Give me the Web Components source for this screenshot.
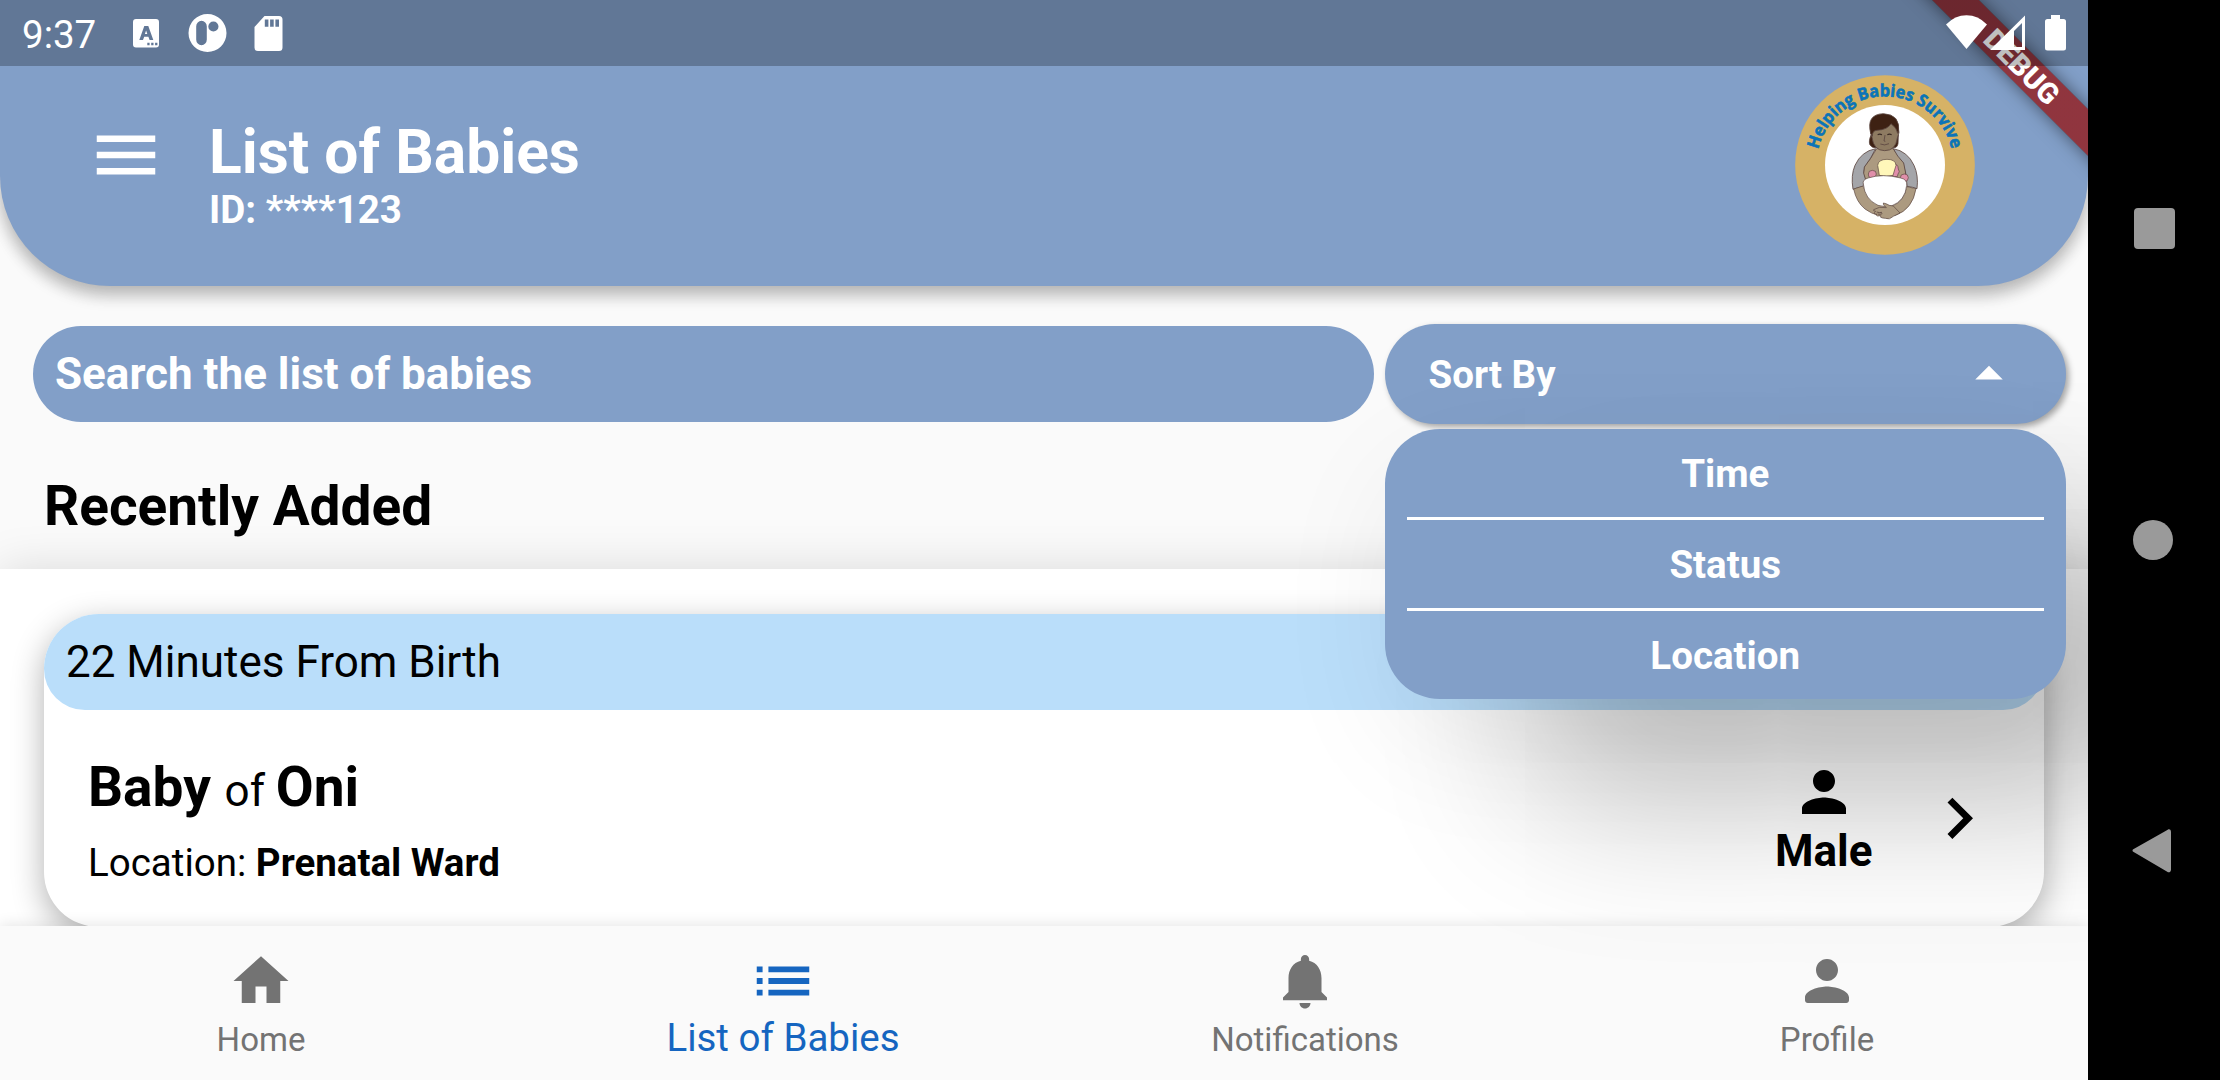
<!DOCTYPE html>
<html lang="en">
<head>
<meta charset="utf-8">
<title>List of Babies</title>
<style>
html,body{margin:0;height:100%;background:#000;overflow:hidden}
body{font-family:Roboto,"Liberation Sans",sans-serif;color:#000;--blue:#829fc8}
.screen{display:flex;width:2220px;height:1080px}
</style>
</head>
<body>
<div class="screen">
  <baby-app></baby-app>
  <system-nav></system-nav>
</div>
<script>
const define = (name, html) => {
  const t = document.createElement('template');
  t.innerHTML = html;
  customElements.define(name, class extends HTMLElement {
    constructor() {
      super();
      this.attachShadow({mode: 'open'}).append(t.content.cloneNode(true));
    }
  });
};

define('system-nav', `
<style>
:host{display:flex;flex-direction:column;width:132px;background:#000;align-items:center}
svg{display:block;width:132px;height:1080px;fill:#9a9a9a}
</style>
<svg viewBox="0 0 132 1080"><rect x="46" y="208" width="41" height="41" rx="4"/><circle cx="65" cy="540" r="20"/><path d="M46 850.5 80.500 831q1-1 1 1V869.500q0 2-1.500 1z" stroke="#9a9a9a" stroke-width="3" stroke-linejoin="round"/></svg>`);

define('status-bar', `
<style>
:host{display:flex;box-sizing:border-box;height:66px;background:rgba(0,0,0,.25);color:#fff;font-size:38.5px;line-height:69px;padding-left:22px}
span{width:111px}
svg{display:block;height:66px;fill:#fff}
.r{margin-left:auto}
</style>
<span>9:37</span>
<svg width="160" viewBox="133 0 160 66">
<path fill-rule="evenodd" d="M136 19h20q3 0 3 3v22.500q0 3-3 3h-20q-3 0-3-3V22q0-3 3-3zM144.300 26l-5 14h3.700l1.200-3.300h4.200l1.200 3.300h3.700l-5-14zm1.800 4.500 1.200 3.500h-2.400zM147.300 42.800v2.400h2.300v-2.400zm3.900 0v2.400h2.300v-2.400zm3.900 0v2.400h2.300v-2.400z"/>
<path fill-rule="evenodd" d="M207.500 14a19 19 0 1 1 0 38a19 19 0 1 1 0-38zM196.200 26.500v13a5.300 5.800 0 0 0 10.600 0v-13a5.300 5.800 0 0 0-10.600 0zM208.300 26.500a5.100 5.100 0 1 0 10.200 0a5.100 5.100 0 1 0-10.200 0z"/>
<path fill-rule="evenodd" d="M264.500 16h14.500q3.500 0 3.500 3.500V47.500q0 3.500-3.500 3.500h-21q-3.500 0-3.500-3.500V27zM264.800 19.500v7.200h3.600v-7.200zm5.300 0v7.200h3.600v-7.200zm5.300 0v7.200h3.600v-7.200z"/>
</svg>
<svg class="r" width="148" viewBox="1940 0 148 66">
<path d="M1946 24.500Q1955 15.300 1966.500 15.300T1987 24.500L1966.500 49z"/>
<path fill-rule="evenodd" d="M2025 15.500V50H1990zM2022 23 2014 31V47h8z"/>
<path d="M2051 15h9v4h3.500q2.500 0 2.500 2.500V48q0 2.500-2.500 2.500h-16q-2.500 0-2.500-2.500V21.500q0-2.500 2.500-2.500h3.500z"/>
</svg>`);

define('debug-banner', `
<style>
:host{display:block;overflow:hidden;width:220px;height:220px;position:relative}
div{position:absolute;left:-16px;top:49.5px;width:340px;height:33px;line-height:34px;text-align:center;transform:rotate(45deg);background:linear-gradient(rgba(183,28,28,.627),rgba(183,28,28,.627)),rgba(0,0,0,.4);
color:#fff;font-weight:900;font-size:29px;box-shadow:0 0 17px rgba(0,0,0,.5)}
</style><div>DEBUG</div>`);

define('brand-logo', `
<style>
:host{display:block;width:180px;height:180px}
svg{display:block;width:180px;height:180px}
text{font:bold 51px "Open Sans",sans-serif;fill:#0b74b8;stroke:#0b74b8;stroke-width:1.800px}
</style>
<svg viewBox="105 75 540 540">
<defs><path id="arc" d="M175 299A205 205 0 0 1 576 304"/></defs>
<circle cx="375" cy="345" r="269.500" fill="#d6b266"/><circle cx="375" cy="345" r="180" fill="#fff"/>
<text textLength="551" lengthAdjust="spacingAndGlyphs"><textPath href="#arc" textLength="551" lengthAdjust="spacingAndGlyphs">Helping Babies Survive</textPath></text>
<g stroke="#5b4640" stroke-width="2.500" stroke-linejoin="round">
<path fill="#3e2113" d="M333 255q-8 20-3 30 8 10 16 8h54q12 1 14-12l1-26z"/>
<path fill="#ac9a80" d="M350 296Q330 330 312 352q-5 20 2 38h120q5-15 1-43-2-10-9-15-20-25-26-36z"/>
<path fill="#a4a5a9" d="M347 296q-43 8-62 50-13 30-6 72 14-5 31-9-2-12 7-20-10-20-4-38 20-25 34-55z"/>
<path fill="#a4a5a9" d="M400 296q43 8 62 50 14 30 9 70-13-5-30-7 0-30-10-70-20-20-31-43z"/>
<path fill="#ac9a80" d="M281 417q8 39 34 60 20 15 42 19l27-4 22 4q52-18 62-80l-28-6q-8 45-42 57l-26-3q-43-5-61-52l-2-4z" stroke-width="2"/>
<path fill="#8e7b62" d="M334 235q-6 12 2 27 5 40 38 40t38-38q8-16 3-30l-20-25h-45z"/>
<path fill="#3e2113" d="M332 250q-14-57 38-59 52 2 46 56l-3 3q-2-16-20-29-10 18-42 20-14 0-14 18z"/>
<path fill="#e08faa" stroke-width="2" d="M325 372q0-11 12-11t12 11-12 12-12-12zM421 383q0-11 12-11t12 11-12 12-12-12zM402 345q12-5 13 12 6 9-1 15l-2 8q-10 2-18-6z"/>
<path fill="#fff7ba" stroke-width="2" d="M353 346q2-18 28-18t27 18l-9 30q-20 6-41 0z"/>
<path fill="#fff" stroke-width="2" d="M310 402q-4-12 14-18 44-14 98 0 20 4 18 22-4 46-46 62-20 4-40-2-40-18-44-64z"/>
<path fill="#ac9a80" stroke-width="2" d="M400 468l-12-2q-10-6-18-7-3 4 9 14-22-5-38 6-2 5 6 5-6 4-3 8h6q-3 5 3 6l9-1q-3 6 6 7l8 1q12 6 24-6l20-10z"/>
</g>
<path fill="none" stroke="#3b2b24" stroke-width="3.500" d="M353 254q6-3 13 0M382 254q6-3 13 0"/>
<path fill="none" stroke="#5b4640" stroke-width="2.500" d="M375 255l-3 18 4 1M361 282q13 6 26-1M350 486q8 3 16 1M353 492q8 2 14-1"/>
</svg>`);

define('app-header', `
<style>
:host{display:flex;box-sizing:border-box;height:286px;background:var(--blue);border-radius:0 0 110px 110px;box-shadow:0 10px 16px rgba(0,0,0,.2),0 5px 18px rgba(0,0,0,.12);color:#fff;font-weight:700;align-items:flex-start;padding:0 113px 0 87px;flex:none;position:relative}
.menu{width:78px;height:78px;margin-top:115.500px;fill:#fff}
.t{margin:117px auto 0 44px}
h1{margin:0;font-size:60.5px;font-weight:700;line-height:71px}
p{margin:-1px 0 0;font-size:38.5px;line-height:45px}
brand-logo{margin-top:75px}
</style>
<svg class="menu" viewBox="0 0 24 24"><path d="M3 18h18v-2H3v2zm0-5h18v-2H3v2zm0-7v2h18V6H3z"/></svg>
<div class="t"><h1>List of Babies</h1><p>ID: ****123</p></div>
<brand-logo></brand-logo>`);

define('search-field', `
<style>:host{display:flex;flex:1;box-sizing:border-box;height:96px;border-radius:48px;background:var(--blue);color:#fff;font-weight:700;font-size:44px;align-items:center;padding-left:22px}</style>
<span><slot></slot></span>`);

define('menu-option', `
<style>
:host{display:block;color:#fff;font-weight:700;font-size:38.5px;line-height:90px;height:88px;text-align:center;border-bottom:3px solid #fff}
:host(:last-of-type){border:0}
</style><slot></slot>`);

define('sort-menu', `
<style>
:host{display:block;position:relative;width:681.5px;z-index:5;color:#fff;font-weight:700;font-size:38.5px}
.b{display:flex;box-sizing:border-box;height:99.500px;border-radius:50px;background:var(--blue);box-shadow:3px 3px 6px rgba(0,0,0,.34);align-items:center;justify-content:space-between;padding:0 44px}
.b span{padding-top:2px}
svg{width:66px;height:66px;fill:#fff}
.d{position:absolute;top:105px;left:0;right:0;border-radius:55px;background:var(--blue);padding:0 22px;box-shadow:145px 108px 155px rgba(0,0,0,.23),10px 45px 130px rgba(0,0,0,.07)}
</style>
<div class="b"><span>Sort By</span><svg viewBox="0 0 24 24"><path d="M7 14l5-5 5 5z"/></svg></div>
<div class="d"><slot></slot></div>`);

define('baby-card', `
<style>
:host{display:block;height:313.500px;border-radius:55px;background:#fff;box-shadow:0 10px 32px rgba(0,0,0,.31)}
header{box-sizing:border-box;height:96px;border-radius:55px 55px 41px 41px;background:#badefa;font-size:44px;line-height:96px;padding-left:22px}
.b{display:flex;box-sizing:border-box;height:217px;align-items:center;padding:0 44px}
.l{margin-right:auto;padding-top:4px}
.n{font-size:44px;line-height:65px;height:65px}
.n b{font-size:55px}
.p{font-size:38.5px;line-height:45px;margin-top:20px}
.g{font-size:44px;font-weight:700;line-height:52px;text-align:center}
.g svg{display:block;width:66px;height:66px;margin:0 auto}
.c{width:82.5px;height:82.5px;margin-left:45px}
</style>
<header><slot name="age"></slot></header>
<div class="b"><div class="l">
<div class="n"><b>Baby </b>of <b><slot name="mother"></slot></b></div>
<div class="p">Location: <b><slot name="place"></slot></b></div></div>
<div class="g"><svg viewBox="0 0 24 24"><path d="M12 12c2.210 0 4-1.790 4-4s-1.790-4-4-4-4 1.790-4 4 1.790 4 4 4zm0 2c-2.670 0-8 1.340-8 4v2h16v-2c0-2.660-5.330-4-8-4z"/></svg><slot name="sex"></slot></div>
<svg class="c" viewBox="0 0 24 24"><path d="M10 6 8.590 7.410 13.170 12l-4.580 4.590L10 18l6-6z"/></svg>
</div>`);

define('nav-item', `
<style>
:host{display:flex;flex:1;flex-direction:column;align-items:center;color:#737373;fill:currentColor;font-size:33px;padding-top:22px}
.i{height:66px;display:flex;align-items:center}
.l{line-height:40px;margin-top:6px}
:host([selected]){color:#1565c0;font-size:38.5px}
:host([selected]) .l{margin-top:4px}
::slotted(svg){width:66px;height:66px;display:block}
:host([selected]) ::slotted(svg){width:70px;height:70px}
</style>
<div class="i"><slot name="icon"></slot></div><div class="l"><slot></slot></div>`);

define('bottom-nav', `
<style>:host{display:flex;height:154px;flex:none;background:#fafafa;box-shadow:0 -1px 14px rgba(0,0,0,.11);position:relative}</style>
<nav-item><svg slot="icon" viewBox="0 0 24 24"><path d="M10 20v-6h4v6h5v-8h3L12 3 2 12h3v8z"/></svg>Home</nav-item>
<nav-item selected><svg slot="icon" viewBox="0 0 24 24"><path d="M3 13h2v-2H3v2zm0 4h2v-2H3v2zm0-8h2V7H3v2zm4 4h14v-2H7v2zm0 4h14v-2H7v2zM7 7v2h14V7H7z"/></svg>List of Babies</nav-item>
<nav-item><svg slot="icon" viewBox="0 0 24 24"><path d="M12 22c1.100 0 2-.9 2-2h-4c0 1.100.89 2 2 2zm6-6v-5c0-3.070-1.640-5.640-4.500-6.320V4c0-.83-.67-1.500-1.500-1.500s-1.500.67-1.500 1.500v.68C7.630 5.360 6 7.920 6 11v5l-2 2v1h16v-1l-2-2z"/></svg>Notifications</nav-item>
<nav-item><svg slot="icon" viewBox="0 0 24 24"><path d="M12 12c2.210 0 4-1.790 4-4s-1.790-4-4-4-4 1.790-4 4 1.790 4 4 4zm0 2c-2.670 0-8 1.340-8 4v1c0 .55.45 1 1 1h14c.55 0 1-.45 1-1v-1c0-2.660-5.330-4-8-4z"/></svg>Profile</nav-item>`);

define('baby-app', `
<style>
:host{display:flex;flex-direction:column;width:2088px;height:1080px;background:#fafafa;position:relative;overflow:hidden}
.s{display:flex;align-items:center;gap:11px;padding:38px 22px 0 33px}
h2{margin:50.500px 44px 29.500px;font-size:55px;line-height:65px;font-weight:700}
main{flex:1;background:#fff;padding:45px 44px 0;box-shadow:0 0 44px rgba(0,0,0,.13);min-height:0}
debug-banner{position:absolute;top:0;right:0}
status-bar{position:absolute;top:0;left:0;right:0}
</style>
<app-header></app-header>
<div class="s"><search-field>Search the list of babies</search-field>
<sort-menu><menu-option>Time</menu-option><menu-option>Status</menu-option><menu-option>Location</menu-option></sort-menu></div>
<h2>Recently Added</h2>
<main><baby-card><span slot="age">22 Minutes From Birth</span><span slot="mother">Oni</span><span slot="place">Prenatal Ward</span><span slot="sex">Male</span></baby-card></main>
<bottom-nav></bottom-nav>
<debug-banner></debug-banner>
<status-bar></status-bar>`);
</script>
</body>
</html>
